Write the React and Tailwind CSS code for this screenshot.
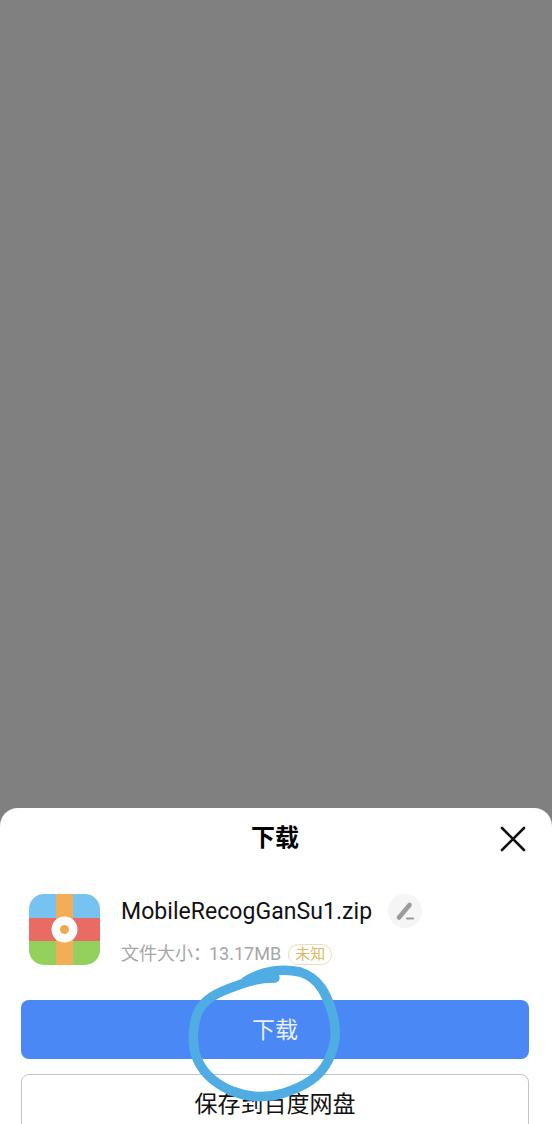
const FONT = 'font-["Roboto","Noto_Sans_CJK_SC",sans-serif]';

function AppIcon() {
  return (
    <svg width="71" height="71" viewBox="0 0 71 71" className="shrink-0">
      <defs>
        <clipPath id="squircle">
          <rect width="71" height="71" rx="15" />
        </clipPath>
      </defs>
      <g clipPath="url(#squircle)">
        <rect width="71" height="24" fill="#76c3f1" />
        <rect y="24" width="71" height="23" fill="#e96b64" />
        <rect y="47" width="71" height="24" fill="#93d05c" />
        <rect x="27" width="17" height="71" fill="#f3ad56" />
      </g>
      <circle cx="35.5" cy="35.5" r="13" fill="#fff" />
      <circle cx="35.5" cy="35.5" r="4.5" fill="#eea94f" />
    </svg>
  );
}

function Scribble() {
  return (
    <svg
      width="552"
      height="1124"
      viewBox="0 0 552 1124"
      fill="none"
      className="absolute left-0 top-0 pointer-events-none"
    >
      <path
        d="M275 978 C262 978 250 980 236 986 C215 993 204 1000 198 1012 C193 1024 192 1040 195 1053 C200 1070 213 1083 232 1091 C250 1098 268 1098 284 1093 C305 1086 320 1077 328 1061 C335 1046 338 1033 332 1012 C327 996 320 978 300 972 C282 968 262 971 246 981"
        stroke="#4fade3"
        strokeWidth="9.5"
        strokeLinecap="round"
        strokeLinejoin="round"
      />
    </svg>
  );
}

export default function App() {
  return (
    <div className={`relative flex h-[1124px] w-[552px] flex-col overflow-hidden bg-[#808080] ${FONT}`}>
      <div className="h-[808px] shrink-0" />
      <div className="flex h-[316px] shrink-0 flex-col rounded-t-[18px] bg-white pl-[21px] pr-[23px]">
        <div className="relative flex h-[60px] shrink-0 items-center justify-center">
          <span className="text-[24px] font-bold text-black">下载</span>
          <svg width="26" height="26" viewBox="0 0 26 26" className="absolute right-[3px] top-[18px]" fill="none">
            <path d="M2 2 L24 24 M24 2 L2 24" stroke="#111" strokeWidth="2.6" strokeLinecap="round" />
          </svg>
        </div>
        <div className="mt-[26px] flex items-start gap-[21px] pl-2">
          <AppIcon />
          <div className="flex flex-col">
            <div className="flex h-[34px] items-center gap-[16px]">
              <span className="pt-[1px] text-[23px] leading-[33px] tracking-[0.05px] text-[#111]">MobileRecogGanSu1.zip</span>
              <span className="flex h-[34px] w-[34px] items-center justify-center rounded-full bg-[#f5f5f5]">
                <svg width="20" height="20" viewBox="0 0 20 20" fill="none">
                  <path d="M4 16.5 L14.5 4" stroke="#9b9b9b" strokeWidth="4.5" strokeLinecap="round" />
                  <path d="M12 17.5 H18" stroke="#9b9b9b" strokeWidth="2.2" strokeLinecap="round" />
                </svg>
              </span>
            </div>
            <div className="mt-[13px] flex items-center gap-[7px]">
              <span className="text-[18px] leading-[26px] text-[#a6a6a6]">
                文件大小<span className="tracking-[-2px]">：</span>13.17MB
              </span>
              <span className="flex h-[21px] w-[44px] items-center justify-center rounded-full border border-[#eedcb4] text-[15px] text-[#dfb766]">
                未知
              </span>
            </div>
          </div>
        </div>
        <button className="mt-[33px] flex h-[59px] shrink-0 items-center justify-center rounded-[8px] bg-[#4a88f5] pt-[4px] text-[23px] text-[#e8f0fe]">
          下载
        </button>
        <button className="mt-[15px] flex h-[59px] shrink-0 items-center justify-center rounded-[8px] border border-[#c4c4c4] bg-white pt-[4px] text-[23px] text-[#111]">
          保存到百度网盘
        </button>
      </div>
      <Scribble />
    </div>
  );
}
